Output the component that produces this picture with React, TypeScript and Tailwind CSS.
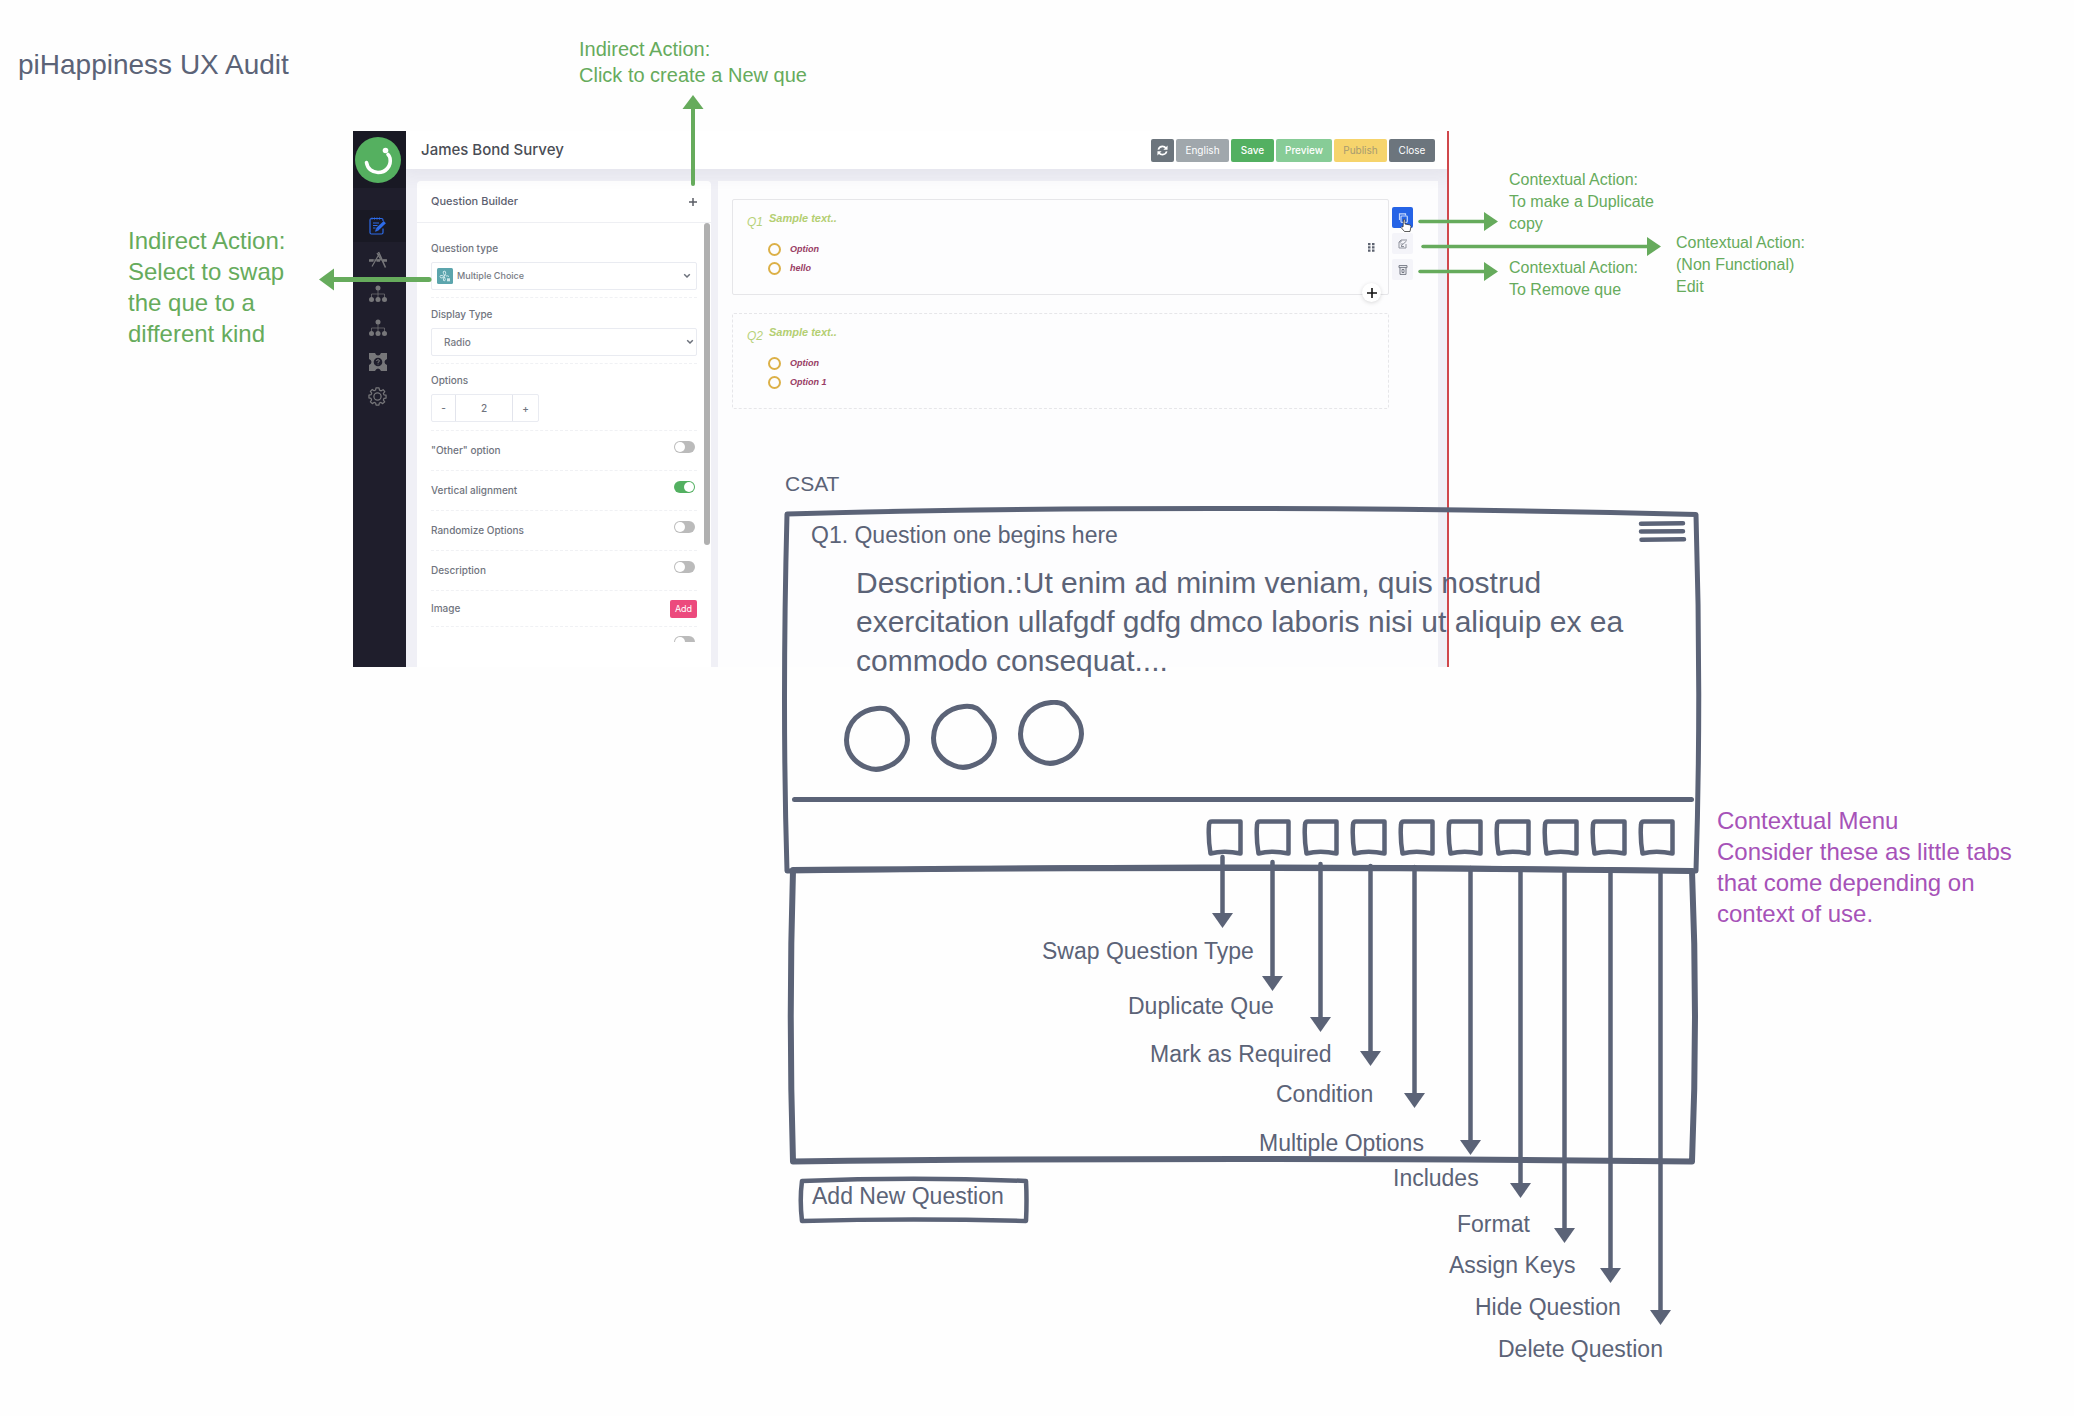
import React from "react";

const SLATE = "#5b6377";
const GREEN = "#66ab5c";

/* ---------- icons ---------- */

function Logo() {
  return (
    <svg viewBox="0 0 46 46" className="size-[46px]" aria-hidden="true">
      <circle cx="23" cy="23" r="23" fill="#55b060" />
      <path d="M11.500 25.500C12.500 32 17.500 35.500 23 35.500C31 35.500 36.500 29 35 21C34.700 19.500 34 18.500 33 17.500" fill="none" stroke="#fff" strokeWidth="3.600" strokeLinecap="round" />
      <circle cx="30.500" cy="13.500" r="2.800" fill="#fff" />
    </svg>
  );
}

function NoteIcon() {
  return (
    <svg viewBox="0 0 18 18" className="size-[18px]" fill="none" stroke="#2d6be8" aria-hidden="true">
      <path d="M14 11.500V15.500Q14 17 12.500 17H2.500Q1 17 1 15.500V3Q1 1.500 2.500 1.500H12.500Q14 1.500 14 3V4" strokeWidth="1.200" />
      <path d="M3 .5V2.500M5.500 .5V2.500M8 .5V2.500M10.500 .5V2.500M4 6H10M4 8.500H8.500M4 11H6.500" strokeWidth="1" />
      <path d="M8 12.500L15.800 5.200" strokeWidth="3.200" />
      <path d="M6 14.800L7 11.600L9.200 13.800Z" fill="#2d6be8" stroke="none" />
    </svg>
  );
}

function DesignIcon() {
  return (
    <svg viewBox="0 0 18 18" className="size-[18px]" fill="none" stroke="#77777a" aria-hidden="true">
      <path d="M9.500 1L16.500 16.500" strokeWidth="1.600" />
      <path d="M10.500 2.500L3 15.500M8 2L12 9" strokeWidth="1.200" />
      <path d="M0 9.500H4.500M7.500 9.500H11M14 9.500H18" strokeWidth="2.400" />
      <path d="M1 9H17" strokeWidth=".8" />
    </svg>
  );
}

function TreeIcon() {
  return (
    <svg viewBox="0 0 18 18" className="size-[18px]" fill="#77777a" aria-hidden="true">
      <circle cx="9" cy="3" r="2.500" />
      <circle cx="2.500" cy="14.500" r="2.500" />
      <circle cx="9" cy="14.500" r="2.500" />
      <circle cx="15.500" cy="14.500" r="2.500" />
      <path d="M9 4V13M2.500 13V9H15.500V13" fill="none" stroke="#77777a" strokeWidth=".7" />
    </svg>
  );
}

function PuzzleIcon() {
  return (
    <svg viewBox="0 0 18 18" className="size-[18px]" aria-hidden="true">
      <path d="M0 0H6Q7 2.500 9 2.500Q11 2.500 12 0H18V6Q15.500 7 15.500 9Q15.500 11 18 12V18H12Q11 15.500 9 15.500Q7 15.500 6 18H0V12Q2.500 11 2.500 9Q2.500 7 0 6Z" fill="#77777a" />
      <circle cx="9" cy="9" r="4.300" fill="#1f1e2c" />
      <path d="M7.500 8Q7.700 6.700 9 6.700Q10.500 6.800 10.400 8Q10.200 9 9 9.300V10M9 10.700V11.500" fill="none" stroke="#77777a" strokeWidth="1" />
    </svg>
  );
}

function GearIcon() {
  return (
    <svg viewBox="0 0 20 20" className="size-[19px]" fill="none" stroke="#77777a" strokeWidth="1.300" strokeLinejoin="round" aria-hidden="true">
      <circle cx="10" cy="10" r="3.800" />
      <path d="M8.400 1H11.600L12.100 3.300L13.900 4L15.900 2.800L17.700 4.900L16.200 6.800L16.800 8.300L19 8.600V11.600L16.800 12L16.200 13.700L17.600 15.600L15.500 17.500L13.600 16.200L12 16.800L11.500 19H8.500L8 16.800L6.400 16.200L4.500 17.500L2.500 15.500L3.800 13.600L3.200 12L1 11.500V8.500L3.200 8.100L3.900 6.500L2.500 4.600L4.500 2.600L6.400 3.900L8 3.200Z" />
    </svg>
  );
}

function RefreshIcon() {
  return (
    <svg viewBox="0 0 10 10" className="size-[11px]" fill="none" stroke="#fff" strokeWidth="1.500" aria-hidden="true">
      <path d="M1.200 4.200Q2 1.300 5 1.300Q7 1.300 8.200 3M8.800 5.800Q8 8.700 5 8.700Q3 8.700 1.800 7" />
      <path d="M9.600 .5V4.300H5.800ZM.4 9.500V5.700H4.200Z" fill="#fff" stroke="none" />
    </svg>
  );
}

function Chevron({ className }: { className: string }) {
  return (
    <svg viewBox="0 0 8 6" className={className} fill="none" stroke="#6c717b" strokeWidth="1.500" aria-hidden="true">
      <path d="M1.200 1.200L4 4L6.800 1.200" />
    </svg>
  );
}

function ChoiceIcon() {
  return (
    <svg viewBox="0 0 16 16" className="absolute left-[6px] top-[6px] size-4" aria-hidden="true">
      <rect width="16" height="16" rx="1.500" fill="#5ca5ad" />
      <path d="M7 3Q9 3 8.700 5.500L7.800 8L6.500 5.500Q5.500 3.500 7 3ZM3 8.500Q3 7 5 7.500L7.500 8.700L5 10Q3 10 3 8.500ZM7.500 9Q6 10.500 6.500 12.500Q8 13.500 8.300 11.500ZM9 8Q10.500 7.500 12 8.500" fill="none" stroke="#d9eef0" strokeWidth=".9" />
      <path d="M10 10.300H13V13.300H10Z" fill="#cfe8ea" />
    </svg>
  );
}

/* ---------- embedded product window ---------- */

const navItems = [
  { label: "Edit survey", icon: <NoteIcon />, active: true },
  { label: "Design", icon: <DesignIcon /> },
  { label: "Logic", icon: <TreeIcon /> },
  { label: "Branching", icon: <TreeIcon /> },
  { label: "Integrations", icon: <PuzzleIcon /> },
  { label: "Settings", icon: <GearIcon /> },
];

function Sidebar() {
  return (
    <nav className="z-20 flex w-[53px] shrink-0 flex-col bg-[#1f1e2c]" aria-label="Survey sections">
      <div className="flex h-[57px] items-center bg-[#191924] pl-[2px]">
        <Logo />
      </div>
      <div className="mt-[22px] flex flex-col gap-[2px]">
        {navItems.map((n) => (
          <button
            key={n.label}
            aria-label={n.label}
            className={
              n.active
                ? "flex h-8 items-center justify-center bg-[#191924] pr-1"
                : "flex h-8 items-center justify-center pr-1"
            }
          >
            {n.icon}
          </button>
        ))}
      </div>
    </nav>
  );
}

function TopBar() {
  const base = "h-[23px] rounded-xs text-[10px]";
  return (
    <header className="z-10 flex h-[38px] shrink-0 items-center justify-between bg-white pl-[15px] pr-3 shadow-[0_4px_16px_4px_rgba(70,60,110,0.06)]">
      <h2 className="text-[15px] font-medium text-[#4a4d55]">James Bond Survey</h2>
      <div className="flex gap-[2px]">
        <button aria-label="Refresh" className={base + " flex w-[23px] items-center justify-center bg-[#6c757d]"}>
          <RefreshIcon />
        </button>
        <button className={base + " w-[53px] bg-[#a0a7ac] text-white"}>English</button>
        <button className={base + " w-[43px] bg-[#53b061] font-medium text-white"}>Save</button>
        <button className={base + " w-[56px] bg-[#87cc97] font-medium text-white"}>Preview</button>
        <button className={base + " w-[53px] bg-[#f6d46c] text-[#a79b70]"}>Publish</button>
        <button className={base + " w-[46px] bg-[#6c757d] text-white"}>Close</button>
      </div>
    </header>
  );
}

function Toggle({ id, on }: { id: string; on?: boolean }) {
  return (
    <input
      id={id}
      type="checkbox"
      role="switch"
      defaultChecked={on}
      className="mr-[2px] mb-2 h-3 w-[21px] appearance-none rounded-full bg-[#bbbbbb] before:m-[1px] before:block before:size-[10px] before:rounded-full before:bg-white checked:bg-[#53b061] checked:before:ml-[10px]"
    />
  );
}

const toggles = [
  { id: "other", label: '"Other" option' },
  { id: "vertical", label: "Vertical alignment", on: true },
  { id: "random", label: "Randomize Options" },
  { id: "desc", label: "Description" },
];

const divider = "border-b border-dashed border-[#f0f1f4]";
const selectBox =
  "h-7 w-full appearance-none rounded-xs border border-[#e9ebf1] bg-white text-[#777b84]";

function QuestionBuilder() {
  return (
    <aside className="flex w-[294px] shrink-0 flex-col rounded-t-sm bg-white">
      <div className="flex h-[42px] shrink-0 items-center justify-between border-b border-[#eeeff3] pl-[14px] pr-[13px]">
        <h3 className="text-[11px] font-medium text-[#5c5f70]">Question Builder</h3>
        <button aria-label="Add question" className="flex size-[10px] items-center justify-center">
          <svg viewBox="0 0 8 8" className="size-2" stroke="#5b5e66" strokeWidth="1.500" aria-hidden="true">
            <path d="M4 0V8M0 4H8" />
          </svg>
        </button>
      </div>
      <div className="relative h-[419px] overflow-hidden text-[10px] font-medium text-[#70747e]">
        <div className="absolute right-[1px] top-0 h-[322px] w-[6px] rounded-full bg-[#b0b0b0]" />
        <div className="px-[14px]">
          <div className={divider + " pt-[17px] pb-[7px]"}>
            <label htmlFor="qtype" className="mb-[6px] block leading-4">Question type</label>
            <div className="relative">
              <select id="qtype" className={selectBox + " pl-[25px] text-[9px]"}>
                <option>Multiple Choice</option>
              </select>
              <ChoiceIcon />
              <Chevron className="absolute right-[6px] top-[11px] h-[6px] w-2" />
            </div>
          </div>
          <div className={divider + " pt-2 pb-[7px]"}>
            <label htmlFor="dtype" className="mb-[6px] block leading-4">Display Type</label>
            <div className="relative">
              <select id="dtype" className={selectBox + " pl-3 text-[10px]"}>
                <option>Radio</option>
              </select>
              <Chevron className="absolute right-[3px] top-[11px] h-[6px] w-2" />
            </div>
          </div>
          <div className={divider + " pt-2 pb-2"}>
            <label htmlFor="count" className="mb-[6px] block leading-4">Options</label>
            <div className="flex h-7 w-[108px] rounded-xs border border-[#e9ebf1]">
              <button aria-label="Fewer options" className="w-[23px]">-</button>
              <input
                id="count"
                defaultValue="2"
                className="w-0 flex-1 border-x border-[#e2e4ec] text-center text-[10px]"
              />
              <button aria-label="More options" className="w-[25px]">+</button>
            </div>
          </div>
          {toggles.map((t) => (
            <div key={t.id} className={divider + " flex h-10 items-center justify-between"}>
              <label htmlFor={t.id}>{t.label}</label>
              <Toggle id={t.id} on={t.on} />
            </div>
          ))}
          <div className={divider + " flex h-9 items-center justify-between"}>
            <span>Image</span>
            <button className="h-[18px] w-[27px] rounded-xs bg-[#ec4a7d] text-[9px] font-normal text-white">Add</button>
          </div>
          <div className="flex h-10 items-start justify-end pt-[9px]">
            <Toggle id="more" />
          </div>
        </div>
      </div>
    </aside>
  );
}

function QuestionCard({ n, options, active }: { n: number; options: string[]; active?: boolean }) {
  return (
    <div className="grid grid-cols-[1fr_21px] gap-[3px]">
      <div
        className={
          active
            ? "relative flex h-24 rounded-xs border border-[#e6e6e9] pl-[14px] font-['Liberation_Sans',sans-serif] italic"
            : "relative flex h-24 rounded-xs border border-dashed border-[#e6e6e9] pl-[14px] font-['Liberation_Sans',sans-serif] italic"
        }
      >
        <span className="w-[22px] pt-[14px] text-xs leading-4 text-[#b8d27a]">Q{n}</span>
        <fieldset>
          <legend className="pt-[10px] text-[11px] font-bold leading-4 text-[#b4cf72]">Sample text..</legend>
          <div className="mt-[17px] flex flex-col gap-[6px]">
            {options.map((o) => (
              <label key={o} className="flex items-center gap-[9px] text-[9px] leading-[13px] font-bold text-[#983c64]">
                <input type="radio" name={"q" + n} className="-ml-[1px] size-[13px] appearance-none rounded-full border-2 border-[#dcb047]" />
                {o}
              </label>
            ))}
          </div>
        </fieldset>
        {active && (
          <>
            <svg viewBox="0 0 7 9" className="absolute right-[13px] top-[43px] h-[9px] w-[7px]" fill="#5d6370" aria-hidden="true">
              <path d="M0 0H2.500V2.200H0ZM4 0H6.500V2.200H4ZM0 3.300H2.500V5.500H0ZM4 3.300H6.500V5.500H4ZM0 6.600H2.500V8.800H0ZM4 6.600H6.500V8.800H4Z" />
            </svg>
            <button aria-label="Insert question" className="absolute -bottom-2 right-[7px] flex size-[19px] items-center justify-center rounded-full bg-white shadow-[0_1px_4px_rgba(0,0,0,0.15)]">
              <svg viewBox="0 0 10 10" className="size-[10px]" stroke="#111" strokeWidth="1.600" aria-hidden="true">
                <path d="M5 0V10M0 5H10" />
              </svg>
            </button>
          </>
        )}
      </div>
      {active && (
        <div className="flex flex-col gap-[5px] pt-2">
          <button aria-label="Duplicate" className="relative flex size-[21px] items-center justify-center rounded-xs bg-[#2563e6]">
            <svg viewBox="0 0 10 10" className="size-[10px]" fill="none" stroke="#c5d8fb" strokeWidth="1.200" aria-hidden="true">
              <rect x="3" y="3" width="6.300" height="6.300" rx=".8" />
              <path d="M1.500 7V.8H7.500V2.500" />
            </svg>
            <svg viewBox="0 0 12 15" className="absolute -bottom-[5px] left-[8px] h-[15px] w-3" aria-hidden="true">
              <path d="M3.500 1.500Q4.800 .5 5 2V6L9.500 6.800Q11 7.200 11 8.500L10 13.500H4.500L1 9.500Q1.500 8 3 9Z" fill="#fff" stroke="#333" strokeWidth=".8" />
            </svg>
          </button>
          <button aria-label="Edit" className="flex size-[21px] items-center justify-center rounded-xs bg-[#f4f4f9]">
            <svg viewBox="0 0 10 10" className="size-[10px]" fill="none" stroke="#8f929c" strokeWidth="1" aria-hidden="true">
              <path d="M8 5V9H1V3L3 1H9M3 1V3H1M3 7L8.500 2M2.500 5H5M6 7.500H3" />
            </svg>
          </button>
          <button aria-label="Remove" className="flex size-[21px] items-center justify-center rounded-xs bg-[#f4f4f9]">
            <svg viewBox="0 0 10 10" className="size-[10px]" fill="none" stroke="#777b86" strokeWidth="1" aria-hidden="true">
              <path d="M1 .6H9V2.600H1ZM2 3V9.400H8V3M4 4.500V7.500H6V4.500Z" />
            </svg>
          </button>
        </div>
      )}
    </div>
  );
}

function ProductWindow() {
  return (
    <section
      aria-label="James Bond Survey editor"
      className="absolute left-[353px] top-[131px] isolate flex h-[536px] w-[1096px] overflow-hidden border-r-2 border-[#d0484c] bg-[#f0f0f6] font-['Inter',sans-serif]"
    >
      <Sidebar />
      <div className="flex min-w-0 flex-1 flex-col">
        <TopBar />
        <div className="flex min-h-0 flex-1 gap-[7px] pl-[11px] pr-[9px] pt-3">
          <QuestionBuilder />
          <div className="flex flex-1 flex-col gap-[18px] bg-[#fdfdfe] pt-[18px] pl-[14px] pr-[25px]">
            <QuestionCard n={1} options={["Option", "hello"]} active />
            <QuestionCard n={2} options={["Option", "Option 1"]} />
          </div>
        </div>
      </div>
    </section>
  );
}

/* ---------- hand-drawn wireframe ---------- */

function Frame({ viewBox, d, width }: { viewBox: string; d: string; width: number }) {
  return (
    <svg viewBox={viewBox} preserveAspectRatio="none" className="pointer-events-none absolute inset-0 size-full overflow-visible" fill="none" stroke={SLATE} strokeWidth={width} strokeLinejoin="round" aria-hidden="true">
      <path d={d} />
    </svg>
  );
}

const blob =
  "M33 2.500C38 2 42 2.500 46 4.500C50 7 54 13 58.500 18C62 23 63.500 28 63.500 34C63 46 55 56 45 60C38 63.500 30 64.500 23 61.500C10 57 2.500 46 2.500 34C3 16 16 4 33 2.500Z";

const tabNames = [
  "Swap Question Type",
  "Duplicate Que",
  "Mark as Required",
  "Condition",
  "Multiple Options",
  "Includes",
  "Format",
  "Assign Keys",
  "Hide Question",
  "Delete Question",
];

function Wireframe() {
  return (
    <section className="absolute left-[784px] top-[471px] flex w-[914px] flex-col text-[#5b6377]">
      <h3 className="pl-[1px] text-[21px] leading-[26px]">CSAT</h3>
      <div className="relative mt-[10px] pt-3 pb-[17px]">
        <Frame viewBox="0 0 914 367" d="M3 7Q200 1.500 430 1.500Q680 1.500 912 7.500Q917.500 190 912 365Q660 361 420 361Q200 362 3 365Q-2 200 3 7Z" width={5} />
        <div className="flex items-start justify-between pl-[27px] pr-[11px]">
          <h4 className="text-[23px] leading-8">Q1. Question one begins here</h4>
          <button aria-label="Menu">
            <svg viewBox="0 0 50 24" className="h-6 w-[50px]" stroke={SLATE} strokeWidth="4.500" strokeLinecap="round" aria-hidden="true">
              <path d="M4 4.700L46 4.200M4 12.500L46 12.200M4.500 20.800L47 20.200" />
            </svg>
          </button>
        </div>
        <p className="mt-3 mr-12 ml-[72px] text-[30px] leading-[39px]">
          Description.:Ut enim ad minim veniam, quis nostrud
          <br />
          exercitation ullafgdf gdfg dmco laboris nisi ut aliquip ex ea
          <br />
          commodo consequat....
        </p>
        <svg viewBox="0 0 241 73" className="mt-5 ml-[60px] h-[73px] w-[241px]" fill="none" stroke={SLATE} strokeWidth="5" aria-hidden="true">
          <path d={blob} transform="translate(0 6)" />
          <path d={blob} transform="translate(87 4)" />
          <path d={blob} transform="translate(174 0)" />
        </svg>
        <div className="mt-6 mr-[4px] ml-[8px] h-[5px] rounded-full bg-[#5b6377]" />
        <div className="mt-[17px] flex justify-end gap-[11px] pr-[23px]">
          {tabNames.map((t) => (
            <button key={t} aria-label={t} className="size-[37px]">
              <svg viewBox="0 0 37 37" className="size-full" fill="none" stroke={SLATE} strokeWidth="4.500" strokeLinejoin="round" aria-hidden="true">
                <path d="M6 2.500L34.500 2.500L34.500 34.500Q18 31 4.500 34.500Q2 19 3 6Q3 2.500 6 2.500Z" />
              </svg>
            </button>
          ))}
        </div>
      </div>
      <div className="relative -mt-[6px] mr-[1px] ml-1 h-[298px]">
        <Frame viewBox="0 0 909 298" d="M5 3Q220 1 450 1Q690 1 904 4Q910 150 904 294.500Q670 292 450 292Q220 292 5 294.500Q.5 150 5 3Z" width={6} />
      </div>
      <button className="relative mt-[11px] ml-[14px] h-12 w-[231px] pb-2 pl-[14px] text-left text-[23px] leading-8">
        <Frame viewBox="0 0 231 48" d="M4 5Q115 .5 228 5Q229 24 228 45Q115 42 4 45Q1.500 24 4 5Z" width={4.5} />
        Add New Question
      </button>
    </section>
  );
}

/* ---------- arrows and notes on the canvas ---------- */

const downArrows = [
  [1222, 857, 928],
  [1272, 862, 991],
  [1320, 864, 1032],
  [1370, 866, 1066],
  [1414, 867, 1108],
  [1470, 868, 1155],
  [1520, 872, 1198],
  [1564, 872, 1243],
  [1610, 872, 1283],
  [1660, 872, 1325],
];

const rightArrows = [
  [1420, 1498, 221],
  [1423, 1661, 246],
  [1420, 1498, 271],
];

function Arrows() {
  return (
    <svg className="pointer-events-none absolute inset-0 size-full" strokeLinecap="round" aria-hidden="true">
      {downArrows.map(([x, y1, y2]) => (
        <g key={x} stroke={SLATE} fill={SLATE}>
          <path d={`M${x + 0.5} ${y1}V${y2 - 12}`} strokeWidth="4.500" />
          <path d={`M${x - 10} ${y2 - 15}H${x + 11}L${x + 0.5} ${y2}Z`} stroke="none" />
        </g>
      ))}
      {rightArrows.map(([x1, x2, y]) => (
        <g key={y} stroke={GREEN} fill={GREEN}>
          <path d={`M${x1} ${y + 0.5}H${x2 - 12}`} strokeWidth="3.500" />
          <path d={`M${x2 - 14} ${y - 9}V${y + 10}L${x2} ${y + 0.5}Z`} stroke="none" />
        </g>
      ))}
      <g stroke={GREEN} fill={GREEN}>
        <path d="M693 184V106" strokeWidth="4" />
        <path d="M682.500 109H703.500L693 95Z" stroke="none" />
        <path d="M429 279.500H332" strokeWidth="5" />
        <path d="M334 268.500V290.500L319 279.500Z" stroke="none" />
      </g>
    </svg>
  );
}

const labelSpots = [
  "left-[1042px] top-[935px]",
  "left-[1128px] top-[990px]",
  "left-[1150px] top-[1038px]",
  "left-[1276px] top-[1078px]",
  "left-[1259px] top-[1127px]",
  "left-[1393px] top-[1162px]",
  "left-[1457px] top-[1208px]",
  "left-[1449px] top-[1249px]",
  "left-[1475px] top-[1291px]",
  "left-[1498px] top-[1333px]",
];

const notes = [
  {
    spot: "left-[579px] top-[36px] text-[20px] leading-[26px] text-[#66ab5c]",
    lines: ["Indirect Action:", "Click to create a New que"],
  },
  {
    spot: "left-[128px] top-[225px] text-[24px] leading-[31px] text-[#66ab5c]",
    lines: ["Indirect Action:", "Select to swap", "the que to a", "different kind"],
  },
  {
    spot: "left-[1509px] top-[169px] text-[16px] leading-[22px] text-[#66ab5c]",
    lines: ["Contextual Action:", "To make a Duplicate", "copy"],
  },
  {
    spot: "left-[1676px] top-[232px] text-[16px] leading-[22px] text-[#66ab5c]",
    lines: ["Contextual Action:", "(Non Functional)", "Edit"],
  },
  {
    spot: "left-[1509px] top-[257px] text-[16px] leading-[22px] text-[#66ab5c]",
    lines: ["Contextual Action:", "To Remove que"],
  },
  {
    spot: "left-[1717px] top-[805px] text-[24px] leading-[31px] text-[#a652b8]",
    lines: ["Contextual Menu", "Consider these as little tabs", "that come depending on", "context of use."],
  },
];

export default function App() {
  return (
    <main className="relative min-h-screen w-full overflow-hidden bg-[#fefefe] font-['Liberation_Sans',Arial,sans-serif]">
      <h1 className="pt-[47px] pl-[18px] text-[28px] leading-9 text-[#5b6377]">piHappiness UX Audit</h1>
      <ProductWindow />
      <Wireframe />
      <Arrows />
      {notes.map((n) => (
        <p key={n.spot} className={"absolute whitespace-nowrap " + n.spot}>
          {n.lines.map((l) => (
            <span key={l} className="block">{l}</span>
          ))}
        </p>
      ))}
      {tabNames.map((t, i) => (
        <span key={t} className={"absolute text-[23px] leading-8 whitespace-nowrap text-[#5b6377] " + labelSpots[i]}>
          {t}
        </span>
      ))}
    </main>
  );
}
